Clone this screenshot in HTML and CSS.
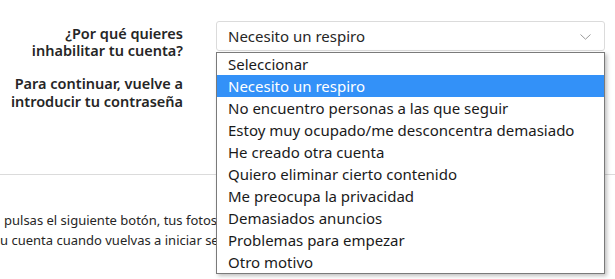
FILE: index.html
```html
<!DOCTYPE html>
<html lang="es">
<head>
<meta charset="utf-8">
<title>Inhabilitar cuenta</title>
<link rel="stylesheet" href="styles.css">
</head>
<body>
<div class="page">
  <form class="form">
    <div class="row">
      <label class="label" for="reason">¿Por qué quieres<br>inhabilitar tu cuenta?</label>
      <div class="field">
        <div class="select" id="reason">
          <span class="select-value">Necesito un respiro</span>
          <svg class="chevron" width="11" height="6" viewBox="0 0 11 6"><path d="M0.5 0.5 L5.5 5.2 L10.5 0.5" fill="none" stroke="#9a9a9a" stroke-width="1"/></svg>
        </div>
        <ul class="dropdown">
          <li class="option">Seleccionar</li>
          <li class="option selected">Necesito un respiro</li>
          <li class="option">No encuentro personas a las que seguir</li>
          <li class="option">Estoy muy ocupado/me desconcentra demasiado</li>
          <li class="option">He creado otra cuenta</li>
          <li class="option">Quiero eliminar cierto contenido</li>
          <li class="option">Me preocupa la privacidad</li>
          <li class="option">Demasiados anuncios</li>
          <li class="option">Problemas para empezar</li>
          <li class="option">Otro motivo</li>
        </ul>
      </div>
    </div>
    <div class="row row-password">
      <label class="label">Para continuar, vuelve a<br>introducir tu contraseña</label>
      <div class="field"></div>
    </div>
  </form>
  <hr class="divider">
  <div class="note">
    <p class="note-line first">pulsas el siguiente botón, tus fotos, comentarios y Me gusta se ocultarán hasta que</p>
    <p class="note-line">u cuenta cuando vuelvas a iniciar sesión.</p>
  </div>
</div>
</body>
</html>
```
FILE: styles.css
```css
* { box-sizing: border-box; }
html, body { margin: 0; padding: 0; background: #fff; }
body {
  font-family: "Noto Sans", "Open Sans", sans-serif;
  color: #262626;
  overflow: hidden;
  width: 615px;
  height: 279px;
}
.page { width: 615px; }
.form { padding-top: 21px; margin: 0; }
.row { display: flex; align-items: flex-start; }
.label {
  width: 183px;
  flex: none;
  text-align: right;
  font-size: 14.5px;
  font-weight: 600;
  line-height: 17px;
  padding-top: 4px;
}
.field {
  position: relative;
  margin-left: 33px;
  width: 389px;
}
.select {
  height: 30px;
  border: 1px solid #dbdbdb;
  border-radius: 3px;
  display: flex;
  align-items: center;
  justify-content: space-between;
  padding: 0 13px 0 11px;
  font-size: 15px;
  background: #fff;
}
.chevron { display: block; margin-top: 1px; }
.row-password { margin-top: 15px; }
.row-password .label { line-height: 18px; padding-top: 0; }
.dropdown {
  position: absolute;
  left: 0;
  top: 31px;
  width: 389px;
  margin: 0;
  padding: 0;
  list-style: none;
  background: #fff;
  border: 1px solid #7a7a7a;
  box-shadow: 2px 2px 4px rgba(0,0,0,0.25);
  z-index: 2;
}
.option {
  height: 22px;
  line-height: 22px;
  padding-left: 11px;
  font-size: 15px;
  color: #1a1a1a;
  white-space: nowrap;
}
.option.selected { background: #3391f8; color: #fff; }
.divider {
  margin: 64px 0 0 0;
  border: 0;
  border-top: 1px solid #dbdbdb;
  height: 0;
}
.note { padding-top: 35px; width: 216px; overflow: hidden; }
.note-line {
  margin: 0;
  font-size: 13px;
  line-height: 20px;
  white-space: nowrap;
  color: #262626;
}
.note-line.first { padding-left: 4px; }
```
